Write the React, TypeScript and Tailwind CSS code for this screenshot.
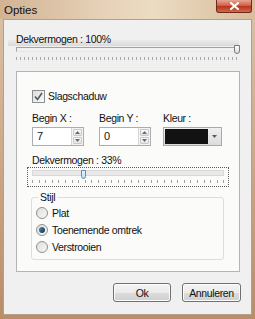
import React from 'react';

const font = { fontFamily: '"Liberation Sans", Arial, sans-serif' };
const txt = 'text-[10.5px] tracking-[-0.35px] text-[#111]';

function Spinner() {
  return (
    <div className="flex w-[12px] flex-col gap-[1px] border-l border-[#d6d6d6] bg-[#f4f4f4] p-[1px]">
      {[0, 1].map((i) => (
        <div
          key={i}
          className="flex flex-1 items-center justify-center rounded-[1px] border border-[#c9c9c9] bg-gradient-to-b from-[#fafafa] to-[#e4e4e4]"
        >
          <svg width="5" height="3" viewBox="0 0 5 3">
            {i === 0 ? <path d="M0 3 L2.5 0 L5 3 Z" fill="#6b6b6b" /> : <path d="M0 0 L2.5 3 L5 0 Z" fill="#6b6b6b" />}
          </svg>
        </div>
      ))}
    </div>
  );
}

function NumberField({ value }: { value: string }) {
  return (
    <div className="flex h-[19px] w-[52px] border border-[#abadb3] bg-white">
      <div className="flex-1 pl-[4px] text-[11px] leading-[17px] text-[#111]">{value}</div>
      <Spinner />
    </div>
  );
}

function Radio({ checked, label }: { checked?: boolean; label: string }) {
  return (
    <div className="flex h-[17px] items-center">
      <div className="flex h-[12px] w-[12px] items-center justify-center rounded-full border border-[#8e8f8f] bg-gradient-to-br from-[#dedede] to-[#f8f8f8]">
        {checked && <div className="h-[6px] w-[6px] rounded-full bg-gradient-to-br from-[#5a8fb8] to-[#0e2f4c]" />}
      </div>
      <span className={`ml-[4px] leading-[12px] ${txt}`}>{label}</span>
    </div>
  );
}

function Button({ label, width }: { label: string; width: string }) {
  return (
    <div
      className={`flex h-[19px] ${width} items-center justify-center rounded-[3px] border border-[#707070] bg-[linear-gradient(to_bottom,#f3f3f3_0%,#ebebeb_50%,#dddddd_50%,#cfcfcf_100%)] leading-[12px] shadow-[inset_0_0_0_1px_#fcfcfc] ${txt}`}
    >
      {label}
    </div>
  );
}

export default function App() {
  return (
    <div
      style={font}
      className="flex h-[319px] w-[255px] flex-col bg-[linear-gradient(to_bottom,#dcc2a6,#c9a381_60%,#b88d68)]"
    >
      {/* title bar */}
      <div className="flex h-[19px] items-start justify-between bg-[linear-gradient(to_right,#d2b394,#e6d1b8_40%,#ecdcc2_60%,#d8bc9c)]">
        <span className="ml-[4px] mt-[4px] text-[11.5px] leading-[12px] text-[#111]">Opties</span>
        <div className="mr-[3px] flex h-[13px] w-[36px] items-center justify-center rounded-b-[3px] border border-t-0 border-[#6b2a1c] bg-[linear-gradient(to_bottom,#e8a593,#cf5a3f_50%,#b7321a_51%,#d06a4a)]">
          <svg width="9" height="8" viewBox="0 0 9 8">
            <path d="M1 1 L8 7 M8 1 L1 7" stroke="#fff" strokeWidth="2" strokeLinecap="square" />
          </svg>
        </div>
      </div>

      {/* client area */}
      <div className="mx-[3px] mb-[4px] flex flex-1 flex-col border border-[#b3a08c] bg-[#f0f0f0]">
        {/* top opacity slider */}
        <div className="ml-[4px] mt-[13px] w-[231px] bg-[linear-gradient(to_bottom,transparent_7px,#ebebeb_7px,#dadada_13px,transparent_13px)]">
          <div className={`h-[12px] pl-[8px] leading-[12px] ${txt}`}>Dekvermogen : 100%</div>
          <div className="relative ml-[8px] mt-[2px] h-[5px] w-[222px] border-l border-t border-[#a3a3a3] border-b border-r border-b-[#e6e6e6] border-r-[#e6e6e6]">
            <div className="absolute left-[217px] top-[-3px] h-[9px] w-[6px] rounded-b-[3px] border border-[#7a7a7a] bg-gradient-to-b from-[#fdfdfd] to-[#dcdcdc]" />
          </div>
          <div className="ml-[8px] mt-[5px] h-[3px] w-[223px] bg-[repeating-linear-gradient(to_right,#a8a8a8_0px,#a8a8a8_1px,transparent_1px,transparent_4px)]" />
        </div>

        {/* options panel */}
        <div className="ml-[12px] mt-[11px] flex h-[201px] w-[224px] flex-col border border-[#b4b4b4] bg-[#fbfbf9]">
          <div className="ml-[15px] mt-[17px] flex items-center">
            <div className="flex h-[13px] w-[13px] items-center justify-center border border-[#8e8f8f] bg-gradient-to-br from-[#dcdcdc] to-[#fafafa]">
              <svg width="9" height="9" viewBox="0 0 9 9">
                <path d="M1 4.5 L3.5 7.5 L8 1" stroke="#4a5a6a" strokeWidth="1.6" fill="none" />
              </svg>
            </div>
            <span className={`ml-[3px] leading-[14px] ${txt}`}>Slagschaduw</span>
          </div>

          <div className="ml-[15px] mt-[8px] flex">
            <div className="mr-[15px] flex flex-col">
              <span className={`h-[14px] leading-[14px] ${txt}`}>Begin X :</span>
              <div className="mt-[2px]">
                <NumberField value="7" />
              </div>
            </div>
            <div className="mr-[12px] flex flex-col">
              <span className={`h-[14px] leading-[14px] ${txt}`}>Begin Y :</span>
              <div className="mt-[2px]">
                <NumberField value="0" />
              </div>
            </div>
            <div className="flex flex-col">
              <span className={`h-[14px] leading-[14px] ${txt}`}>Kleur :</span>
              <div className="mt-[2px] flex h-[19px] w-[59px] border border-[#a9a9a9] bg-gradient-to-b from-[#f0f0f0] to-[#dcdcdc] p-[1px]">
                <div className="w-[43px] bg-[#121212]" />
                <div className="flex flex-1 items-center justify-center">
                  <svg width="5" height="3" viewBox="0 0 5 3">
                    <path d="M0 0 L2.5 3 L5 0 Z" fill="#5a5a5a" />
                  </svg>
                </div>
              </div>
            </div>
          </div>

          <div className={`ml-[15px] mt-[8px] h-[12px] leading-[12px] ${txt}`}>Dekvermogen : 33%</div>

          {/* shadow opacity slider */}
          <div className="ml-[10px] mt-[1px] flex h-[20px] w-[202px] flex-col border border-dotted border-[#5a5a5a] px-[4px] pt-[2px]">
            <div className="relative h-[6px] w-full border border-[#d8d8d8] bg-[#e9e9e9]">
              <div className="absolute left-[48px] top-[-1px] h-[9px] w-[5px] rounded-b-[3px] border border-[#4f8fbf] bg-gradient-to-b from-[#eaf5fc] to-[#b9dcf2]" />
            </div>
            <div className="mt-[4px] h-[3px] w-full bg-[repeating-linear-gradient(to_right,#a0a0a0_0px,#a0a0a0_1px,transparent_1px,transparent_6.6px)]" />
          </div>

          {/* style group */}
          <fieldset className="ml-[14px] mt-[4px] w-[193px] rounded-[3px] border border-[#d5dfe5] pb-[4px] pl-[4px]">
            <legend className={`ml-[2px] px-[2px] leading-[12px] ${txt}`}>Stijl</legend>
            <div className="mt-[1px] flex flex-col">
              <Radio label="Plat" />
              <Radio checked label="Toenemende omtrek" />
              <Radio label="Verstrooien" />
            </div>
          </fieldset>
        </div>

        {/* buttons */}
        <div className="ml-[109px] mt-[11px] flex gap-[11px]">
          <Button label="Ok" width="w-[58px]" />
          <Button label="Annuleren" width="w-[59px]" />
        </div>
      </div>
    </div>
  );
}
